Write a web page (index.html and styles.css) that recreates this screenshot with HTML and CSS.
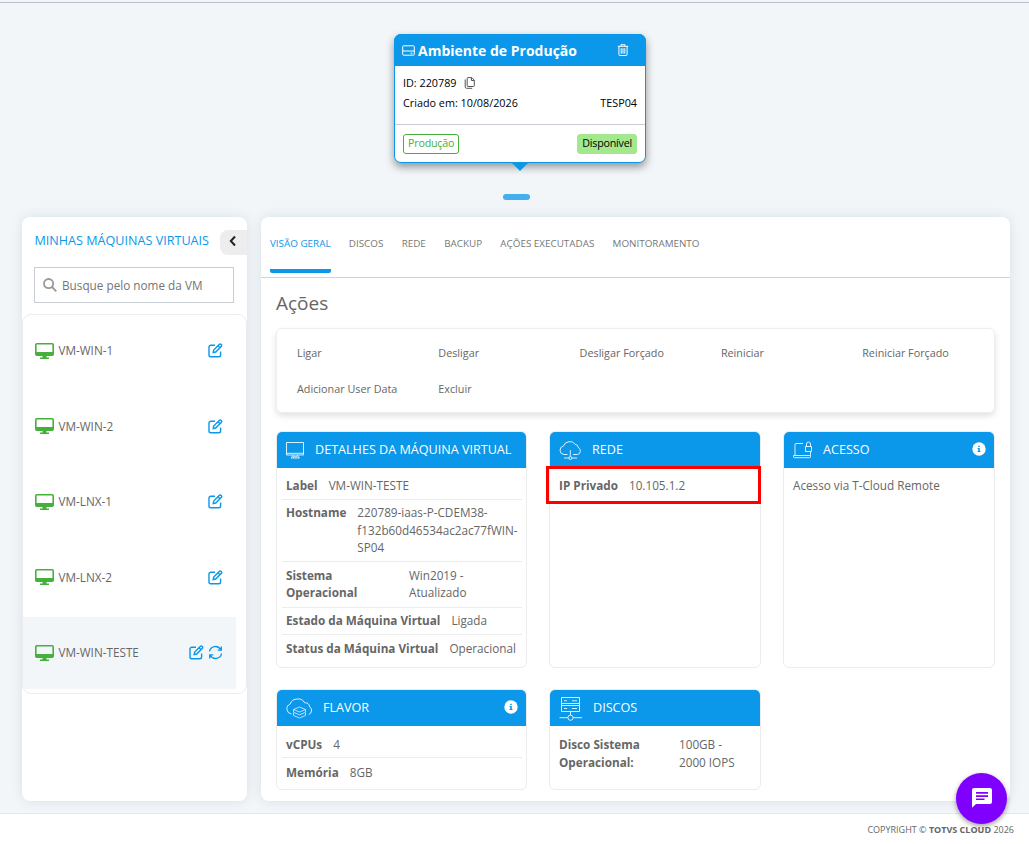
FILE: index.html
```
<!DOCTYPE html>
<html lang="pt-BR">
<head>
    <meta charset="UTF-8">
    <title>TOTVS Cloud</title>
    <link rel="stylesheet" href="styles.css">
</head>
<body>
    <!-- icons used more than once -->
    <svg class="sprite">
        <symbol id="monitor" viewBox="0 0 19 17">
            <path fill-rule="evenodd" d="M1.800 0h15.400a1.800 1.800 0 0 1 1.800 1.800v9.400a1.800 1.800 0 0 1-1.800 1.800H1.800A1.800 1.800 0 0 1 0 11.200V1.800A1.800 1.800 0 0 1 1.800 0zM1.600 1.600V9h15.800V1.600zM7.500 13h4v1.500H14V16H5v-1.500h2.500z"/>
        </symbol>
        <symbol id="edit" viewBox="0 0 15 15">
            <path d="M7 2.200H2.800A1.800 1.800 0 0 0 1 4v8a1.800 1.800 0 0 0 1.800 1.800h8A1.800 1.800 0 0 0 12.600 12V8.500M5.200 9.500l.5-2.500 5.500-5.500a1.300 1.300 0 0 1 2 2L7.700 9zM10 2.700l2 2"/>
        </symbol>
        <symbol id="info" viewBox="0 0 14 14">
            <circle cx="7" cy="7" r="6.700" fill="#fff"/>
            <path d="M6.200 3.700h1.600v1.400H6.200zM5.600 6.100h2.200v3h.7v1h-3v-1h.7V7.100h-.6z" fill="#0b97ea"/>
        </symbol>
    </svg>

    <main class="page">
        <section class="env-card">
            <header class="env-header">
                <svg class="env-icon" width="13" height="11" viewBox="0 0 13 11"><path d="M1.500.8h10a.8.8 0 0 1 .8.8v7.800a.8.8 0 0 1-.8.8h-10a.8.8 0 0 1-.8-.8V1.600a.8.8 0 0 1 .8-.8zM.7 6h11.600M8.500 8.200h2"/></svg>
                <h1>Ambiente de Produção</h1>
                <svg class="env-trash" width="12" height="12" viewBox="0 0 12 12"><path d="M.8 2.300h10.400M4 2.300V.7h4v1.600M1.900 2.500v8a1 1 0 0 0 1 1h6.200a1 1 0 0 0 1-1v-8M4.200 4.200v5.500M6 4.200v5.500M7.800 4.200v5.500"/></svg>
            </header>
            <div class="env-body">
                <div class="env-line">
                    <span>ID: 220789</span>
                    <svg class="env-copy" width="11" height="12" viewBox="0 0 11 12"><path d="M4 .6h3.800l2.500 2.600v5.500a.8.800 0 0 1-.8.8H4a.8.8 0 0 1-.8-.8V1.400A.8.800 0 0 1 4 .6zM7.500.8v2.700h2.700M1.200 2.500v7.400a1.400 1.400 0 0 0 1.400 1.400h5.600"/></svg>
                </div>
                <div class="env-line">
                    <span>Criado em: 10/08/2026</span>
                    <span class="env-site">TESP04</span>
                </div>
            </div>
            <footer class="env-footer">
                <span class="badge badge-outline">Produção</span>
                <span class="badge badge-ok">Disponível</span>
            </footer>
        </section>
        <div class="env-dot"></div>

        <div class="columns">
            <aside class="sidebar">
                <div class="sidebar-top">
                    <h2>MINHAS MÁQUINAS VIRTUAIS</h2>
                    <button class="collapse">
                        <svg width="8" height="12" viewBox="0 0 8 12"><path d="M6 1.500L1.800 6 6 10.500"/></svg>
                    </button>
                </div>
                <label class="search">
                    <svg width="14" height="14" viewBox="0 0 14 14"><circle cx="5.600" cy="5.600" r="4.600"/><path d="M9 9l4.300 4.300"/></svg>
                    <input type="text" placeholder="Busque pelo nome da VM">
                </label>
                <ul class="vm-list">
                    <li class="vm"><svg class="vm-monitor"><use href="#monitor"/></svg><span>VM-WIN-1</span><svg class="vm-action"><use href="#edit"/></svg></li>
                    <li class="vm"><svg class="vm-monitor"><use href="#monitor"/></svg><span>VM-WIN-2</span><svg class="vm-action"><use href="#edit"/></svg></li>
                    <li class="vm"><svg class="vm-monitor"><use href="#monitor"/></svg><span>VM-LNX-1</span><svg class="vm-action"><use href="#edit"/></svg></li>
                    <li class="vm"><svg class="vm-monitor"><use href="#monitor"/></svg><span>VM-LNX-2</span><svg class="vm-action"><use href="#edit"/></svg></li>
                    <li class="vm active">
                        <svg class="vm-monitor"><use href="#monitor"/></svg><span>VM-WIN-TESTE</span>
                        <svg class="vm-action"><use href="#edit"/></svg>
                        <svg class="vm-action" viewBox="0 0 15 15"><path d="M1.500 6.500A6 6 0 0 1 12.600 4.500M13.300 1.500v3.600H9.700M13.500 8.500A6 6 0 0 1 2.400 10.500M1.700 13.500V9.900h3.600"/></svg>
                    </li>
                </ul>
            </aside>

            <section class="content">
                <nav class="tabs">
                    <a class="tab active">VISÃO GERAL</a>
                    <a class="tab">DISCOS</a>
                    <a class="tab">REDE</a>
                    <a class="tab">BACKUP</a>
                    <a class="tab">AÇÕES EXECUTADAS</a>
                    <a class="tab">MONITORAMENTO</a>
                </nav>

                <h2 class="title">Ações</h2>
                <div class="actions">
                    <a>Ligar</a>
                    <a>Desligar</a>
                    <a>Desligar Forçado</a>
                    <a>Reiniciar</a>
                    <a>Reiniciar Forçado</a>
                    <a>Adicionar User Data</a>
                    <a>Excluir</a>
                </div>

                <div class="cards">
                    <article class="card">
                        <header class="card-header">
                            <svg width="19" height="17" viewBox="0 0 19 17"><path d="M.5.5h17v12.500H.5zM.5 11.300h17M7.500 13l-2.500 3h8.500L11 13M7 14.800h4.500"/></svg>
                            <h3>DETALHES DA MÁQUINA VIRTUAL</h3>
                        </header>
                        <dl class="rows">
                            <div class="row"><dt>Label</dt><dd>VM-WIN-TESTE</dd></div>
                            <div class="row"><dt>Hostname</dt><dd>220789-iaas-P-CDEM38-<br>f132b60d46534ac2ac77fWIN-<br>SP04</dd></div>
                            <div class="row row-wrap"><dt>Sistema Operacional</dt><dd>Win2019 - Atualizado</dd></div>
                            <div class="row"><dt>Estado da Máquina Virtual</dt><dd>Ligada</dd></div>
                            <div class="row"><dt>Status da Máquina Virtual</dt><dd>Operacional</dd></div>
                        </dl>
                    </article>

                    <article class="card">
                        <header class="card-header">
                            <svg width="23" height="19" viewBox="0 0 23 19"><path d="M8.500 13.500H5A4.300 4.300 0 0 1 4.500 5 6.200 6.200 0 0 1 10 .7a6.200 6.200 0 0 1 6.200 2.600 4 4 0 0 1 3.300 3.500 3.600 3.600 0 0 1-1 6.700H14M11.300 9v6M5 17h4.800M12.800 17H18"/><circle cx="11.300" cy="17" r="1.500"/></svg>
                            <h3>REDE</h3>
                        </header>
                        <dl class="rows rows-marked">
                            <div class="row"><dt>IP Privado</dt><dd>10.105.1.2</dd></div>
                        </dl>
                    </article>

                    <article class="card">
                        <header class="card-header">
                            <svg width="20" height="18" viewBox="0 0 20 18"><path d="M10 2.500H3a1 1 0 0 0-1 1V14M17.500 11v3M.5 14.500h17v1.200a1 1 0 0 1-1 1h-15a1 1 0 0 1-1-1zM12.500 5.500h6v5h-6zM13.500 5.500V3a2 2 0 0 1 4 0v2.500"/></svg>
                            <h3>ACESSO</h3>
                            <svg class="info"><use href="#info"/></svg>
                        </header>
                        <p class="card-text">Acesso via T-Cloud Remote</p>
                    </article>

                    <article class="card">
                        <header class="card-header">
                            <svg width="27" height="21" viewBox="0 0 27 21"><path d="M5.500 16A5.200 5.200 0 0 1 4.200 6 7.500 7.500 0 0 1 11.500 1a7 7 0 0 1 7 3.700 5.200 5.200 0 0 1 5.300 4.200 4.400 4.400 0 0 1-1 7.600"/><path stroke-width=".7" d="M7.500 11.500l6-2.500 6 2.500-6 2.500zM7.500 11.500v2.800l6 2.500 6-2.500v-2.800M7.500 15v2.500l6 2.500 6-2.500V15"/></svg>
                            <h3>FLAVOR</h3>
                            <svg class="info"><use href="#info"/></svg>
                        </header>
                        <dl class="rows rows-short">
                            <div class="row"><dt>vCPUs</dt><dd>4</dd></div>
                            <div class="row"><dt>Memória</dt><dd>8GB</dd></div>
                        </dl>
                    </article>

                    <article class="card">
                        <header class="card-header">
                            <svg class="disk-icon" width="24" height="24" viewBox="0 0 24 24"><path d="M2.500.5h18v6h-18zM2.500 8.500h18v6h-18zM2.500 6.500v2M20.500 6.500v2M5 3.800h3M13 3.800h5M5 11.500h3M13 11.500h5M11.500 14.500v3.500M.5 20.700h8.400M14.200 20.700h8.800"/><circle cx="11.500" cy="20.700" r="2.600"/></svg>
                            <h3>DISCOS</h3>
                        </header>
                        <dl class="rows rows-short">
                            <div class="row row-wrap row-disk"><dt>Disco Sistema Operacional:</dt><dd>100GB - 2000 IOPS</dd></div>
                        </dl>
                    </article>
                </div>
            </section>
        </div>
    </main>

    <footer class="copyright">COPYRIGHT © <b>TOTVS CLOUD</b> 2026</footer>

    <button class="chat">
        <svg width="20" height="20" viewBox="0 0 20 20"><path fill-rule="evenodd" d="M2 0h16a2 2 0 0 1 2 2v12a2 2 0 0 1-2 2H4l-4 3.700V2a2 2 0 0 1 2-2zM4 4v1.700h12V4zM4 7.200v1.700h12V7.200zM4 10.400v1.700h8.500v-1.700z"/></svg>
    </button>
</body>
</html>
```
FILE: styles.css
```
* {
    box-sizing: border-box;
}

body {
    margin: 0;
    height: 844px;
    overflow: hidden;
    font-family: "Open Sans", sans-serif;
    font-size: 11.72px;
    color: #666;
    background: #fff;
}

h1, h2, h3, p, ul, dl, dd {
    margin: 0;
    padding: 0;
    font-weight: 400;
}

button {
    border: none;
    padding: 0;
}

svg {
    flex: none;
    fill: none;
    stroke: currentColor;
}

.sprite {
    display: none;
}

.page {
    height: 814px;
    padding: 31px 19px 0 22px;
    background: #f2f6f9;
    border-bottom: 1px solid #e2e8ee;
}

.page::before {
    content: "";
    display: block;
    height: 1px;
    margin: -29px -19px 31px -22px;
    background: #b9bfd0;
}

/* environment card */
.env-card {
    position: relative;
    width: 252px;
    height: 129px;
    margin-left: 372px;
    border: 1px solid #0b97ea;
    border-radius: 7px;
    background: #fff;
    color: #000;
    font-size: 10.8px;
    box-shadow: 0 4px 8px rgba(0, 0, 0, .4);
}

.env-card::after {
    content: "";
    position: absolute;
    left: 116px;
    top: 127px;
    border: 9px solid transparent;
    border-top-color: #0b97ea;
    border-bottom: none;
}

.env-header {
    display: flex;
    align-items: center;
    height: 32px;
    margin: -1px -1px 0;
    padding: 0 17px 0 8px;
    border-radius: 7px 7px 0 0;
    background: #0b97ea;
    color: #fff;
}

.env-header h1 {
    flex: 1;
    margin-left: 3px;
    font-size: 14px;
    font-weight: 700;
}

.env-body {
    height: 59px;
    padding: 6px 8px 0;
    border-bottom: 1px solid #c9ced6;
}

.env-line {
    display: flex;
    align-items: center;
    height: 20px;
}

.env-copy {
    margin: 1px 0 0 7px;
    color: #555;
}

.env-site {
    margin-left: auto;
}

.env-footer {
    display: flex;
    justify-content: space-between;
    padding: 9px 8px 0;
}

.badge {
    height: 20px;
    padding: 0 4px;
    border: 1px solid #46b03c;
    border-radius: 3px;
    font-size: 10.7px;
    line-height: 17px;
    letter-spacing: -.2px;
}

.badge-outline {
    color: #46b03c;
}

.badge-ok {
    background: #a3e88f;
    border-color: #a3e88f;
}

.env-dot {
    width: 27px;
    height: 6px;
    margin: 31px 0 17px 481px;
    border-radius: 3px;
    background: #45aeee;
}

.columns {
    display: flex;
    gap: 14px;
    height: 584px;
}

.sidebar, .content {
    border-radius: 8px;
    background: #fff;
    box-shadow: 0 0 12px rgba(60, 80, 100, .13);
}

/* sidebar */
.sidebar {
    width: 225px;
}

.sidebar-top {
    display: flex;
    height: 50px;
    padding: 13px 0 0 12.5px;
}

.sidebar-top h2 {
    flex: 1;
    font-size: 12.6px;
    line-height: 21px;
    white-space: nowrap;
    color: #0b97ea;
}

.collapse {
    width: 27px;
    height: 25px;
    padding-right: 1px;
    border-radius: 8px 0 0 8px;
    background: #ededed;
    color: #222;
}

.collapse svg {
    stroke-width: 2;
}

.search {
    display: flex;
    align-items: center;
    width: 200px;
    height: 36px;
    margin-left: 12px;
    padding-left: 8px;
    border: 1px solid #c9ced4;
    color: #999;
}

.search svg {
    stroke-width: 1.8;
}

.search input {
    width: 160px;
    margin-left: 5px;
    padding: 0;
    border: none;
    font-family: inherit;
    font-size: 11.75px;
}

.search input::placeholder {
    color: #757575;
}

.vm-list {
    height: 380px;
    margin-top: 11px;
    border: 1px solid #ececec;
    border-radius: 9px;
    list-style: none;
}

.vm {
    display: flex;
    align-items: center;
    width: 213px;
    height: 72px;
    margin-bottom: 3.5px;
    padding: 0 13px 1px 12px;
}

.vm.active {
    background: #f2f6f9;
}

.vm span {
    flex: 1;
    margin-left: 4.5px;
    padding-bottom: 1px;
}

.vm-monitor {
    width: 19px;
    height: 17px;
    margin-top: 1px;
    fill: #46b03c;
    stroke: none;
}

.vm-action {
    width: 15px;
    height: 15px;
    margin-left: 4px;
    color: #0b97ea;
    stroke-width: 1.4;
}

/* content */
.content {
    width: 749px;
}

.tabs {
    display: flex;
    gap: 18.3px;
    height: 61px;
    padding-left: 9px;
    border-bottom: 1px solid #cfd3d6;
}

.tab {
    height: 56px;
    font-size: 9.85px;
    line-height: 53px;
    color: #777;
}

.tab.active {
    color: #0b97ea;
    border-bottom: 4px solid #0b97ea;
    border-radius: 2px;
}

.title {
    height: 50px;
    padding-left: 15px;
    font-size: 19px;
    line-height: 50px;
}

.actions {
    display: grid;
    grid-template-columns: repeat(5, 141.3px);
    grid-auto-rows: 36px;
    width: 719px;
    height: 85px;
    margin-left: 15px;
    padding: 6px 0 0 20px;
    border: 1px solid #eee;
    border-radius: 6px;
    font-size: 10.8px;
    line-height: 36px;
    box-shadow: 0 3px 6px rgba(0, 0, 0, .12);
}

.cards {
    display: grid;
    grid-template-columns: 251px 212px 212px;
    grid-template-rows: 237px 101px;
    gap: 21px 22px;
    margin: 18px 0 0 15px;
}

.card {
    border: 1px solid #ececec;
    border-radius: 6px;
}

.card-header {
    display: flex;
    align-items: center;
    height: 36px;
    padding: 0 8px 0 9px;
    border-radius: 5px 5px 0 0;
    background: #0b97ea;
    color: #fff;
    stroke-width: .85;
}

.card-header h3 {
    margin-left: 10px;
    padding-bottom: 2px;
    font-size: 12.6px;
    white-space: nowrap;
}

.disk-icon {
    margin-top: 2px;
}

.info {
    width: 14px;
    height: 14px;
    margin: 0 0 2px auto;
    stroke: none;
}

.rows {
    padding: 4px 4px 0 5px;
}

.row {
    display: flex;
    gap: 11px;
    padding: 4.5px 4px 4.5px;
    line-height: 17.6px;
    border-bottom: 1px solid #ececec;
}

.row:last-child {
    border-bottom: none;
}

.row dt {
    font-weight: 700;
    white-space: nowrap;
}

.row dd {
    white-space: nowrap;
}

.row-wrap dt {
    width: 112px;
    padding-right: 20px;
    white-space: normal;
}

.row-wrap dd {
    width: 70px;
    white-space: normal;
}

.row-disk dt {
    width: 109px;
}

.rows-short .row {
    line-height: 18px;
}

/* highlighted network address */
.rows-marked {
    height: 38px;
    margin: -2px -1px 0 -4px;
    padding: 3px 5px 0 6px;
    border: 3px solid #f00;
}

.card-text {
    padding: 9px;
    line-height: 17.7px;
}

.copyright {
    height: 30px;
    padding-right: 15px;
    font-size: 9px;
    line-height: 32px;
    text-align: right;
}

.chat {
    position: fixed;
    right: 22px;
    bottom: 20.5px;
    display: flex;
    align-items: center;
    justify-content: center;
    width: 51px;
    height: 51px;
    border-radius: 50%;
    background: #8000ff;
    box-shadow: 0 2px 5px rgba(0, 0, 0, .4);
}

.chat svg {
    fill: #fff;
    stroke: none;
}
```
